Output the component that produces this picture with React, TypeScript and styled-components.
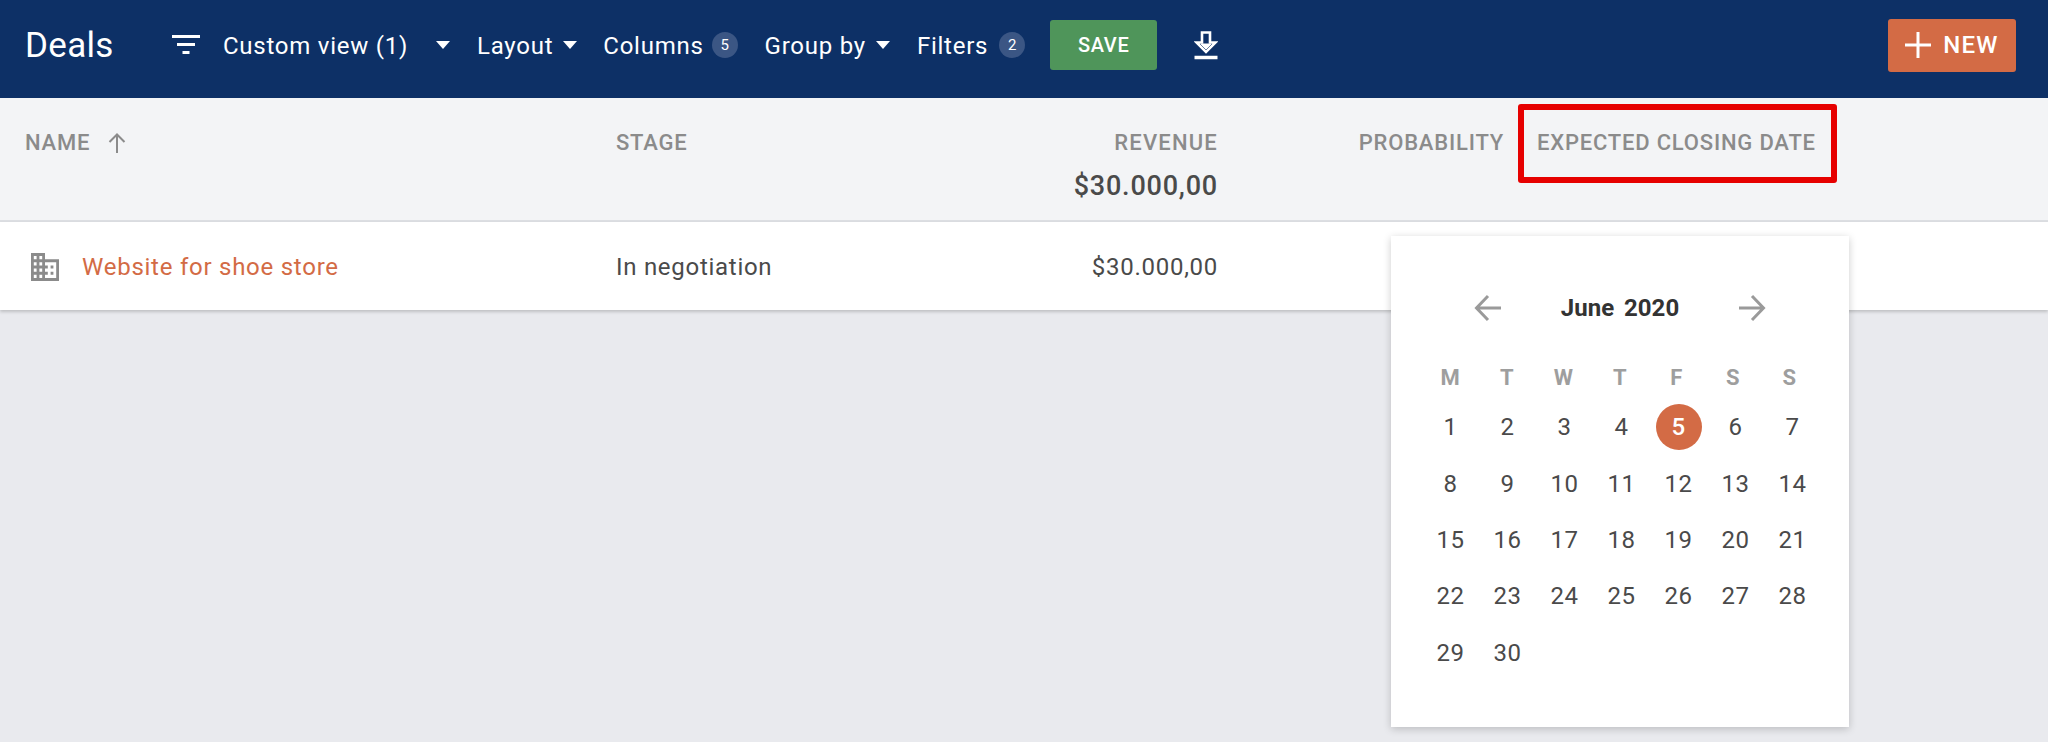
import React from 'react';
import styled, { createGlobalStyle } from 'styled-components';

const Global = createGlobalStyle`
  html, body { margin: 0; padding: 0; background: #e9eaee; }
  body { font-family: "Roboto", "Liberation Sans", sans-serif; }
  * { box-sizing: border-box; }
`;
const Page = styled.div`
  position: relative;
  width: 2048px;
  height: 742px;
  overflow: hidden;
  background: #e9eaee;
`;
const Toolbar = styled.header`
  height: 98px;
  background: #0d3066;
  color: #fff;
  display: flex;
  align-items: center;
  padding: 0 32px 8px 25px;
`;
const Title = styled.h1`
  margin: 0;
  width: 147px;
  padding-top: 1px;
  font-size: 35px;
  font-weight: 400;
  letter-spacing: 0.3px;
  line-height: 1;
`;
const ToolText = styled.span`
  padding-top: 2px;
  font-size: 24px;
  letter-spacing: 0.75px;
  line-height: 1;
  white-space: nowrap;
`;
const ToolItem = styled.div<{ $left: number }>`
  display: flex;
  align-items: center;
  margin-left: ${p => p.$left}px;
`;
const Caret = styled.span<{ $gap: number }>`
  width: 0;
  height: 0;
  margin-left: ${p => p.$gap}px;
  border-left: 7.5px solid transparent;
  border-right: 7.5px solid transparent;
  border-top: 8px solid #fff;
`;
const Badge = styled.span<{ $gap: number }>`
  width: 26px;
  height: 26px;
  margin-left: ${p => p.$gap}px;
  border-radius: 50%;
  background: #3b5684;
  font-size: 15px;
  display: flex;
  align-items: center;
  justify-content: center;
`;
const SaveButton = styled.button`
  margin-left: 25px;
  width: 107px;
  height: 50px;
  border: none;
  border-radius: 3px;
  background: #4f955a;
  color: #fff;
  font: 500 20px "Roboto", sans-serif;
  letter-spacing: 0.6px;
`;
const IconSlot = styled.span`
  margin-left: 37px;
  display: flex;
`;
const NewButton = styled.button`
  margin-left: auto;
  width: 128px;
  height: 53px;
  border: none;
  border-radius: 3px;
  background: #d36b45;
  color: #fff;
  font: 500 24px "Roboto", sans-serif;
  letter-spacing: 1.2px;
  display: flex;
  align-items: center;
  justify-content: center;
  gap: 12px;
`;
const HeadRow = styled.div`
  display: grid;
  grid-template-columns: 591px 300px 302px 286px 1fr;
  align-items: start;
  height: 124px;
  padding: 31px 0 0 25px;
  background: #f3f4f6;
  border-bottom: 2px solid #dcdee2;
`;
const HeadCell = styled.div<{ $right?: boolean }>`
  font-size: 22px;
  font-weight: 500;
  letter-spacing: 0.8px;
  line-height: 28px;
  color: #8b8b8b;
  text-align: ${p => (p.$right ? 'right' : 'left')};
  white-space: nowrap;
`;
const HeadDate = styled(HeadCell)`
  margin-left: 33px;
`;
const NameHead = styled(HeadCell)`
  display: flex;
  align-items: center;
  gap: 18px;
`;
const RevenueLabel = styled.div`
  letter-spacing: 1.2px;
`;
const Total = styled.div`
  margin-top: 13px;
  font-size: 27px;
  font-weight: 500;
  letter-spacing: 0.8px;
  line-height: 32px;
  color: #4a4a4a;
`;
const Row = styled.div`
  display: grid;
  grid-template-columns: 591px 300px 302px;
  align-items: center;
  height: 88px;
  padding: 2px 0 0 25px;
  background: #fff;
  box-shadow: 0 2px 3px rgba(0, 0, 0, 0.18);
`;
const NameCell = styled.div`
  display: flex;
  align-items: center;
  gap: 23px;
  padding-left: 6px;
`;
const DealLink = styled.a`
  font-size: 24px;
  letter-spacing: 0.75px;
  color: #d36b45;
`;
const Cell = styled.div<{ $right?: boolean }>`
  font-size: 24px;
  letter-spacing: 0.72px;
  color: #4a4a4a;
  text-align: ${p => (p.$right ? 'right' : 'left')};
`;
const Highlight = styled.div`
  position: absolute;
  left: 1518px;
  top: 104px;
  width: 319px;
  height: 79px;
  border: 6px solid #e60000;
  border-radius: 3px;
`;
const Popup = styled.div`
  position: absolute;
  left: 1391px;
  top: 236px;
  width: 458px;
  height: 491px;
  padding: 52px 31px 0;
  background: #fff;
  box-shadow: 0 2px 8px rgba(0, 0, 0, 0.2);
`;
const MonthBar = styled.div`
  display: flex;
  align-items: center;
  justify-content: space-between;
  height: 40px;
  padding: 0 52px;
`;
const MonthTitle = styled.div`
  font-size: 24px;
  font-weight: 700;
  word-spacing: 4px;
  color: #333;
`;
const WeekRow = styled.div`
  display: grid;
  grid-template-columns: repeat(7, 56.5px);
  height: 43.6px;
  margin-top: 27.4px;
  justify-items: center;
  align-items: center;
`;
const Days = styled.div`
  display: grid;
  grid-template-columns: repeat(7, 57px);
  grid-auto-rows: 56.4px;
  justify-items: center;
  align-items: center;
`;
const Weekday = styled.div`
  font-size: 22px;
  font-weight: 700;
  color: #9e9e9e;
`;
const Day = styled.div<{ $active?: boolean }>`
  width: 46px;
  height: 46px;
  border-radius: 50%;
  display: flex;
  align-items: center;
  justify-content: center;
  font-size: 24px;
  letter-spacing: 0.5px;
  font-weight: ${p => (p.$active ? 500 : 400)};
  color: ${p => (p.$active ? '#fff' : '#4a4a4a')};
  background: ${p => (p.$active ? '#d36b45' : 'transparent')};
`;

const weekdays = ['M', 'T', 'W', 'T', 'F', 'S', 'S'];
const days = Array.from({ length: 30 }, (_, i) => i + 1);

const Arrow = ({ flip }: { flip?: boolean }) => (
  <svg width="28" height="28" viewBox="0 0 28 28" fill="none" stroke="#9a9a9a" strokeWidth="3"
    style={flip ? { transform: 'scaleX(-1)' } : undefined}>
    <path d="M27 14H3M14 2L2.500 14 14 26" />
  </svg>
);

export default function App() {
  return (
    <Page>
      <Global />
      <Toolbar>
        <Title>Deals</Title>
        <svg width="28" height="20" viewBox="0 0 28 20" fill="#fff">
          <path d="M0 0h28v3H0zM5 8h18v3H5zM10.500 16h7v3h-7z" />
        </svg>
        <ToolItem $left={23}><ToolText>Custom view (1)</ToolText><Caret $gap={28} /></ToolItem>
        <ToolItem $left={27}><ToolText>Layout</ToolText><Caret $gap={10} /></ToolItem>
        <ToolItem $left={26}><ToolText>Columns</ToolText><Badge $gap={8}>5</Badge></ToolItem>
        <ToolItem $left={27}><ToolText>Group by</ToolText><Caret $gap={10} /></ToolItem>
        <ToolItem $left={27}><ToolText>Filters</ToolText><Badge $gap={11}>2</Badge></ToolItem>
        <SaveButton>SAVE</SaveButton>
        <IconSlot>
          <svg width="24" height="29" viewBox="0 0 24 29" fill="#fff" stroke="#fff">
            <path d="M8 1.500h8v10h5.500L12 21 2.500 11.500H8z" fill="none" strokeWidth="2.600" />
            <path d="M7 13h10l-5 5z" strokeWidth="1" />
            <path d="M.5 26.500h23" strokeWidth="3.500" />
          </svg>
        </IconSlot>
        <NewButton>
          <svg width="26" height="26" viewBox="0 0 26 26" stroke="#fff" strokeWidth="3"><path d="M13 0v26M0 13h26" /></svg>
          NEW
        </NewButton>
      </Toolbar>
      <HeadRow>
        <NameHead>
          NAME
          <svg width="18" height="20" viewBox="0 0 18 20" fill="none" stroke="#8b8b8b" strokeWidth="2">
            <path d="M9 20V2M1.500 9L9 1.500 16.500 9" />
          </svg>
        </NameHead>
        <HeadCell>STAGE</HeadCell>
        <HeadCell $right><RevenueLabel>REVENUE</RevenueLabel><Total>$30.000,00</Total></HeadCell>
        <HeadCell $right>PROBABILITY</HeadCell>
        <HeadDate>EXPECTED CLOSING DATE</HeadDate>
      </HeadRow>
      <Row>
        <NameCell>
          <svg width="28" height="28" viewBox="2 3 20 18" fill="#8b8b8b" preserveAspectRatio="none">
            <path d="M12 7V3H2v18h20V7H12zM6 19H4v-2h2v2zm0-4H4v-2h2v2zm0-4H4V9h2v2zm0-4H4V5h2v2zm4 12H8v-2h2v2zm0-4H8v-2h2v2zm0-4H8V9h2v2zm0-4H8V5h2v2zm10 12h-8v-2h2v-2h-2v-2h2v-2h-2V9h8v10zm-2-8h-2v2h2v-2zm0 4h-2v2h2v-2z" />
          </svg>
          <DealLink>Website for shoe store</DealLink>
        </NameCell>
        <Cell>In negotiation</Cell>
        <Cell $right>$30.000,00</Cell>
      </Row>
      <Highlight />
      <Popup>
        <MonthBar>
          <Arrow />
          <MonthTitle>June 2020</MonthTitle>
          <Arrow flip />
        </MonthBar>
        <WeekRow>
          {weekdays.map((d, i) => <Weekday key={i}>{d}</Weekday>)}
        </WeekRow>
        <Days>
          {days.map(d => <Day key={d} $active={d === 5}>{d}</Day>)}
        </Days>
      </Popup>
    </Page>
  );
}
